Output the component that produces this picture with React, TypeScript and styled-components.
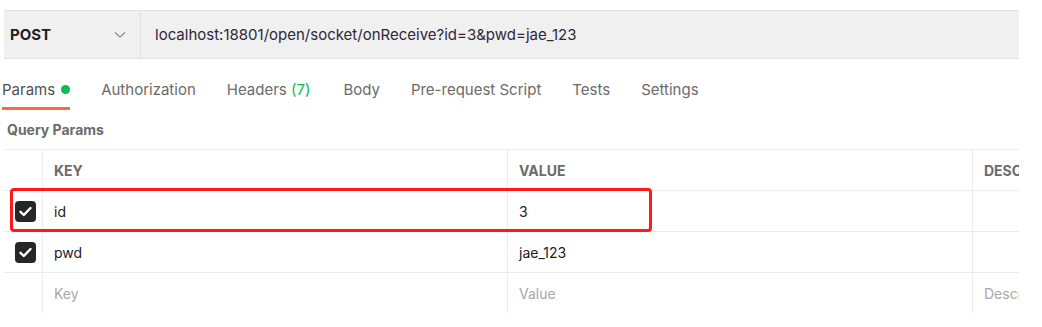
import React from 'react';
import styled, { createGlobalStyle } from 'styled-components';

const GlobalStyle = createGlobalStyle`
  body {
    margin: 0;
    background: #ffffff;
    font-family: Inter, "Noto Sans", "Liberation Sans", sans-serif;
    color: #212121;
  }
`;

const Page = styled.div`
  width: 1015px;
  padding: 10px 0 0 4px;
`;

const UrlBar = styled.div`
  display: flex;
  align-items: stretch;
  height: 47px;
  background: #f0f0f0;
  border-top: 1px solid #e4e4e4;
  border-bottom: 1px solid #e4e4e4;
`;

const MethodBox = styled.div`
  display: flex;
  align-items: center;
  justify-content: space-between;
  width: 137px;
  box-sizing: border-box;
  padding: 0 14px 0 6px;
  border-right: 1px solid #e2e2e2;
  font-size: 15px;
  font-weight: 700;
  color: #212121;
`;

const UrlText = styled.div`
  display: flex;
  align-items: center;
  padding-left: 14px;
  font-size: 15px;
  color: #2e2838;
`;

const TabRow = styled.div`
  display: flex;
  height: 51px;
  margin-left: -2px;
`;

const Tab = styled.div<{ $active?: boolean; $gap?: number }>`
  display: flex;
  align-items: flex-start;
  gap: 6px;
  box-sizing: border-box;
  height: 51px;
  padding-top: 21px;
  margin-right: ${(p) => p.$gap ?? 31}px;
  font-size: 15px;
  color: ${(p) => (p.$active ? '#505050' : '#6b6b6b')};
  border-bottom: 3px solid ${(p) => (p.$active ? '#ff6c37' : 'transparent')};
`;

const Count = styled.span`
  color: #0cbb52;
`;

const Dot = styled.span`
  width: 9px;
  height: 9px;
  border-radius: 50%;
  background: #0cbb52;
  margin-top: 5px;
`;

const SectionTitle = styled.div`
  padding: 11px 0 0 3px;
  height: 28px;
  box-sizing: border-box;
  font-size: 14px;
  font-weight: 700;
  color: #6b6b6b;
`;

const TableWrap = styled.div`
  position: relative;
  margin-top: 11px;
  overflow: hidden;
`;

const Row = styled.div`
  display: grid;
  grid-template-columns: 38px 465px 465px 100px;
  height: 41px;
  border-top: 1px solid #ececec;
  box-sizing: border-box;
  &:last-child {
    height: 42px;
    border-bottom: 1px solid #ececec;
  }
`;

const Cell = styled.div<{ $head?: boolean; $muted?: boolean }>`
  display: flex;
  align-items: center;
  padding-left: 11px;
  border-left: 1px solid #ececec;
  font-size: 14px;
  white-space: nowrap;
  overflow: hidden;
  color: ${(p) => (p.$muted ? '#a8a8a8' : p.$head ? '#6b6b6b' : '#212121')};
  font-weight: ${(p) => (p.$head ? 700 : 400)};
`;

const CheckCell = styled.div`
  display: flex;
  align-items: center;
  padding-left: 11px;
`;

const Box = styled.span`
  display: flex;
  align-items: center;
  justify-content: center;
  width: 21px;
  height: 21px;
  border-radius: 4px;
  background: #262626;
`;

// red annotation frame drawn over the first row
const Highlight = styled.div`
  position: absolute;
  left: 6px;
  top: 39px;
  width: 642px;
  height: 44px;
  box-sizing: border-box;
  border: 3px solid #ff1a1a;
  border-radius: 4px;
`;

const Check = () => (
  <Box>
    <svg width="13" height="11" viewBox="0 0 13 11">
      <path d="M1.5 5.8 L4.8 9 L11.5 2" fill="none" stroke="#fff" strokeWidth="2.4" strokeLinecap="round" strokeLinejoin="round" />
    </svg>
  </Box>
);

const Chevron = () => (
  <svg width="12" height="8" viewBox="0 0 12 8">
    <path d="M1 1.5 L6 6 L11 1.5" fill="none" stroke="#8a8a8a" strokeWidth="1.2" />
  </svg>
);

const rows = [
  { key: 'id', value: '3', checked: true },
  { key: 'pwd', value: 'jae_123', checked: true },
];

const App = () => (
  <Page>
    <GlobalStyle />
    <UrlBar>
      <MethodBox>
        POST
        <Chevron />
      </MethodBox>
      <UrlText>localhost:18801/open/socket/onReceive?id=3&amp;pwd=jae_123</UrlText>
    </UrlBar>
    <TabRow>
      <Tab $active>
        Params <Dot />
      </Tab>
      <Tab>Authorization</Tab>
      <Tab $gap={33}>
        <span>
          Headers <Count>(7)</Count>
        </span>
      </Tab>
      <Tab>Body</Tab>
      <Tab>Pre-request Script</Tab>
      <Tab>Tests</Tab>
      <Tab>Settings</Tab>
    </TabRow>
    <SectionTitle>Query Params</SectionTitle>
    <TableWrap>
      <Row>
        <CheckCell />
        <Cell $head>KEY</Cell>
        <Cell $head>VALUE</Cell>
        <Cell $head>DESCRIPTION</Cell>
      </Row>
      {rows.map((r) => (
        <Row key={r.key}>
          <CheckCell>{r.checked && <Check />}</CheckCell>
          <Cell>{r.key}</Cell>
          <Cell>{r.value}</Cell>
          <Cell />
        </Row>
      ))}
      <Row>
        <CheckCell />
        <Cell $muted>Key</Cell>
        <Cell $muted>Value</Cell>
        <Cell $muted>Description</Cell>
      </Row>
      <Highlight />
    </TableWrap>
  </Page>
);

export default App;
